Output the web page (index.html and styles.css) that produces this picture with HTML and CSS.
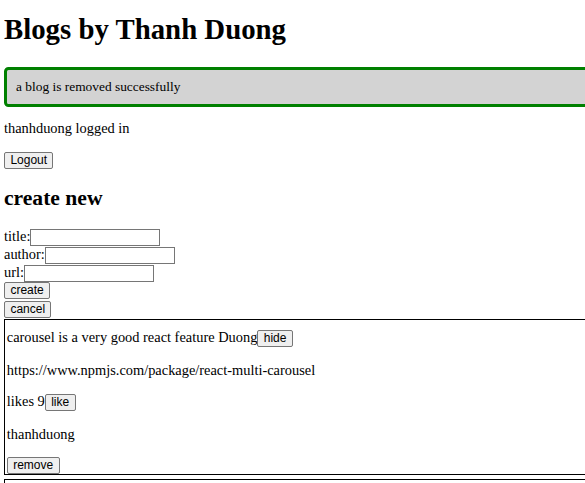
FILE: index.html
```html
<!DOCTYPE html>
<html lang="en">
<head>
<meta charset="utf-8">
<title>Blogs</title>
<link rel="stylesheet" href="styles.css">
</head>
<body>
<div class="app">
  <h1 class="title">Blogs by Thanh Duong</h1>
  <div class="notification">a blog is removed successfully</div>
  <p class="text user">thanhduong logged in</p>
  <div class="bar"><button class="btn">Logout</button></div>
  <h2 class="subtitle">create new</h2>
  <form class="form">
    <div class="row">title:<input class="field" type="text"></div>
    <div class="row">author:<input class="field" type="text"></div>
    <div class="row">url:<input class="field" type="text"></div>
    <div class="bar tall"><button class="btn" type="button">create</button></div>
  </form>
  <div class="bar tall"><button class="btn">cancel</button></div>
  <div class="blog">
    <div class="blog-head">carousel is a very good react feature Duong<button class="btn">hide</button></div>
    <p class="text">https://www.npmjs.com/package/react-multi-carousel</p>
    <p class="text">likes 9<button class="btn">like</button></p>
    <p class="text">thanhduong</p>
    <div class="bar"><button class="btn">remove</button></div>
  </div>
  <div class="blog">
    <div class="blog-head">React patterns Michael Chan<button class="btn">view</button></div>
  </div>
</div>
</body>
</html>
```

FILE: styles.css
```css
html {
  overflow: hidden;
}
body {
  margin: 0;
  font-family: "Liberation Serif", "Times New Roman", serif;
  font-size: 14.4px;
  color: #000;
  background: #fff;
}
.app {
  width: 700px;
  padding-left: 4px;
}
.title {
  font-size: 28.8px;
  font-weight: bold;
  margin: 13px 0 21px;
}
.notification {
  border: 3px solid green;
  background: lightgrey;
  border-radius: 4.5px;
  padding: 9px;
  font-size: 13.4px;
}
.text {
  margin: 14.4px 0;
}
.user {
  margin-top: 13.2px;
}
.bar {
  display: flex;
  align-items: flex-start;
}
.tall {
  height: 18.5px;
}
.btn {
  font-family: "Liberation Sans", Arial, sans-serif;
  font-size: 12px;
  color: #000;
  background: #efefef;
  border: 1px solid #767676;
  border-radius: 2px;
  height: 17px;
  padding: 0 5.4px;
  margin: 0;
  line-height: 15px;
}
.subtitle {
  font-size: 21.6px;
  font-weight: bold;
  margin: 17.9px 0 16.9px;
}
.form {
  margin: 0;
}
.row {
  height: 18px;
}
.field {
  box-sizing: border-box;
  width: 130px;
  height: 17px;
  border: 1px solid #767676;
  border-radius: 0;
  padding: 1px 2px;
  margin: 0;
  font-size: 12px;
  vertical-align: baseline;
}
.blog {
  border: 1px solid #000;
  padding: 9px 0 0 1.8px;
  margin-bottom: 4.5px;
}
.blog-head {
  margin: 0;
}
```
